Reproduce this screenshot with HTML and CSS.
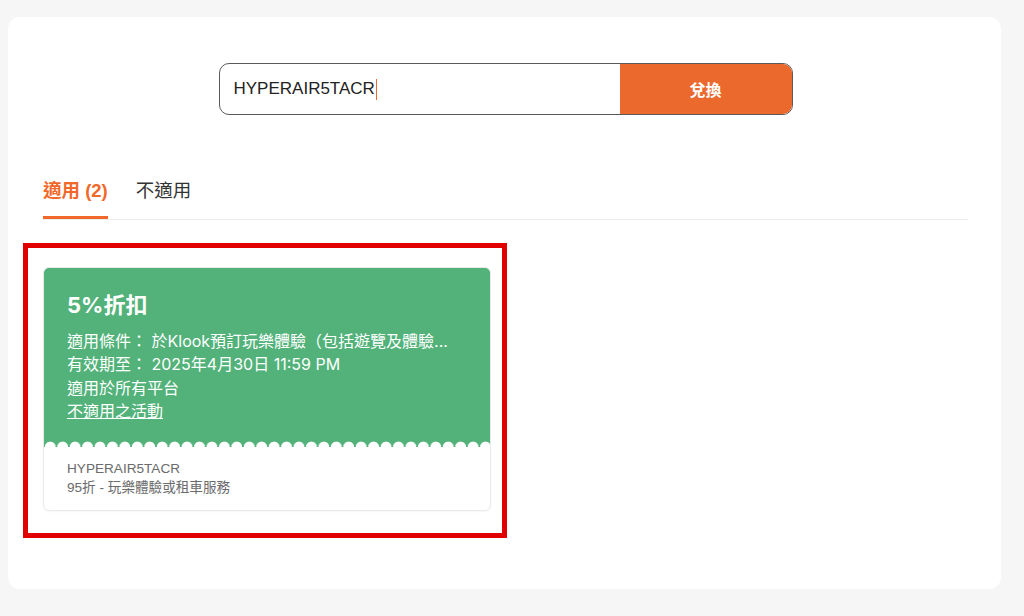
FILE: index.html
```html
<!DOCTYPE html>
<html lang="zh-Hant">
<head>
    <meta charset="UTF-8">
    <meta name="viewport" content="width=device-width, initial-scale=1.0">
    <title>優惠碼</title>
    <link rel="stylesheet" href="styles.css">
</head>
<body>
    <div class="panel">
        <!-- Redeem box -->
        <div class="redeem">
            <div class="redeem-input">
                <span class="redeem-text">HYPERAIR5TACR</span><span class="caret"></span>
            </div>
            <button class="redeem-btn">兌換</button>
        </div>

        <!-- Tabs -->
        <div class="tabs">
            <div class="tab active">適用 (2)</div>
            <div class="tab">不適用</div>
        </div>

        <!-- Coupon list -->
        <div class="highlight">
            <div class="coupon">
                <div class="coupon-head">
                    <h2 class="coupon-title">5%折扣</h2>
                    <p class="coupon-line">適用條件： 於Klook預訂玩樂體驗（包括遊覽及體驗...</p>
                    <p class="coupon-line">有效期至： 2025年4月30日 11:59 PM</p>
                    <p class="coupon-line">適用於所有平台</p>
                    <p class="coupon-line"><a href="#" class="coupon-link">不適用之活動</a></p>
                </div>
                <div class="coupon-body">
                    <p>HYPERAIR5TACR</p>
                    <p>95折 - 玩樂體驗或租車服務</p>
                </div>
            </div>
        </div>
    </div>
</body>
</html>
```

FILE: styles.css
```css
/* Global */
* {
    box-sizing: border-box;
    margin: 0;
    padding: 0;
}

body {
    background-color: #f6f6f6;
    font-family: "Liberation Sans", "Noto Sans CJK TC", sans-serif;
    color: #333;
    overflow: hidden;
}

/* Main white panel */
.panel {
    margin: 17px 23px 0 8px;
    height: 572px;
    background-color: #fff;
    border-radius: 12px;
    padding: 46px 33px 0 35px;
}

/* Redeem box */
.redeem {
    display: flex;
    width: 574px;
    height: 52px;
    margin: 0 auto;
    border: 1px solid #5a5a5a;
    border-radius: 10px;
    overflow: hidden;
}

.redeem-input {
    flex: 1;
    display: flex;
    align-items: center;
    padding-left: 14px;
    font-size: 17px;
    color: #222;
}

.caret {
    display: inline-block;
    width: 1px;
    height: 21px;
    margin-left: 1px;
    background-color: #ec6a2f;
}

.redeem-btn {
    width: 172px;
    border: none;
    background-color: #ec692e;
    color: #fff;
    font-family: inherit;
    font-size: 16px;
    font-weight: bold;
}

/* Tabs */
.tabs {
    display: flex;
    gap: 28px;
    margin-top: 64px;
    border-bottom: 1px solid #ececec;
}

.tab {
    font-size: 18.5px;
    line-height: 24px;
    padding-bottom: 13px;
    border-bottom: 3px solid transparent;
    color: #333;
}

.tab.active {
    color: #f0682a;
    font-weight: bold;
    border-bottom-color: #f0682a;
}

/* Red highlight frame */
.highlight {
    width: 484px;
    margin: 23px 0 0 -20px;
    border: 5px solid #e00000;
    padding: 19px 11px 22px 15px;
}

/* Coupon card */
.coupon {
    border: 1px solid #e9e9e9;
    border-radius: 6px;
    overflow: hidden;
    box-shadow: 0 1px 2px rgba(0, 0, 0, 0.04);
}

.coupon-head {
    position: relative;
    background-color: #52b27a;
    color: #fff;
    font-family: Inter, "Noto Sans CJK TC", sans-serif;
    padding: 22px 23px 24px;
}

/* scalloped bottom edge */
.coupon-head::after {
    content: "";
    position: absolute;
    left: 0;
    right: 0;
    bottom: 0;
    height: 6px;
    background: radial-gradient(circle at 50% 100%, #fff 5px, rgba(255, 255, 255, 0) 5.8px);
    background-size: 12.44px 6px;
    background-repeat: repeat-x;
}

.coupon-title {
    font-size: 22px;
    line-height: 30px;
    font-weight: bold;
    margin-bottom: 10px;
}

.coupon-line {
    font-size: 16px;
    line-height: 23.3px;
    white-space: nowrap;
}

.coupon-link {
    color: #fff;
}

.coupon-body {
    padding: 12px 23px 13px;
    font-size: 13.6px;
    line-height: 19px;
    color: #6b6b6b;
}
```
